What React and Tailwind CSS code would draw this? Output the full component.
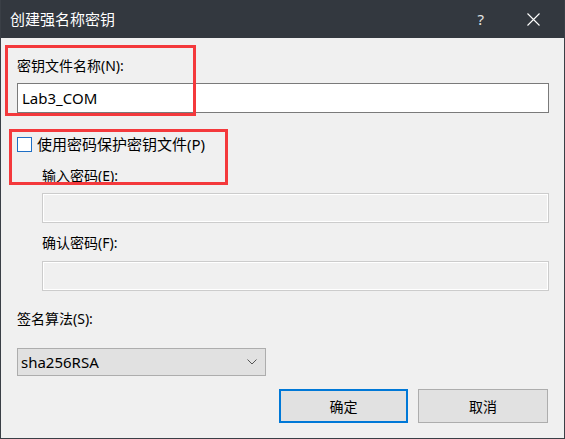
import React from "react";

const font = "font-['Noto_Sans','Noto_Sans_CJK_SC',sans-serif]";

export default function App() {
  return (
    <div className={`relative w-[565px] h-[439px] bg-[#f0f0f0] border border-t-0 border-[#3a3f46] flex flex-col text-black ${font}`}>
      {/* Title bar */}
      <div className="h-[38px] bg-[#33383f] flex items-center pl-[9px] pr-[24px] text-white shrink-0">
        <span className="text-[15px] leading-none">创建强名称密钥</span>
        <div className="ml-auto flex items-center gap-[43px]">
          <span className="text-[15px] leading-none text-[#e6e6e6]">?</span>
          <svg width="13" height="13" viewBox="0 0 13 13">
            <path d="M0.5 0.5 L12.5 12.5 M12.5 0.5 L0.5 12.5" stroke="#ffffff" strokeWidth="1.1" fill="none" />
          </svg>
        </div>
      </div>

      {/* Content */}
      <div className="flex flex-col pl-[16px] pr-[15px]">
        <div className="mt-[18px] h-[20px] leading-[20px] text-[14px]">密钥文件名称(N):</div>
        <div className="mt-[7px] h-[30px] bg-white border border-[#7a7a7a] flex items-center pl-[4px] text-[15px]">
          Lab3_COM
        </div>

        <div className="mt-[21px] h-[20px] flex items-center">
          <div className="w-[15px] h-[15px] border border-[#1f6fc5] bg-white shrink-0" />
          <span className="ml-[5px] text-[15px] leading-[20px]">使用密码保护密钥文件(P)</span>
        </div>

        <div className="pl-[25px] flex flex-col">
          <div className="mt-[12px] h-[20px] leading-[20px] text-[14px]">输入密码(E):</div>
          <div className="mt-[7px] h-[30px] border border-[#cccccc] bg-[#f0f0f0] shadow-[inset_0_0_0_1px_#ffffff]" />
          <div className="mt-[10px] h-[20px] leading-[20px] text-[14px]">确认密码(F):</div>
          <div className="mt-[8px] h-[30px] border border-[#cccccc] bg-[#f0f0f0] shadow-[inset_0_0_0_1px_#ffffff]" />
        </div>

        <div className="mt-[18px] h-[20px] leading-[20px] text-[14px]">签名算法(S):</div>
        <div className="mt-[19px] w-[249px] h-[28px] bg-[#e1e1e1] border border-[#adadad] flex items-center pl-[3px] pr-[8px] text-[15px]">
          <span>sha256RSA</span>
          <svg className="ml-auto" width="10" height="6" viewBox="0 0 10 6">
            <path d="M0.5 0.5 L5 5 L9.5 0.5" stroke="#555555" strokeWidth="1" fill="none" />
          </svg>
        </div>

        <div className="mt-[13px] flex justify-end gap-[10px] pr-[1px]">
          <button className="w-[129px] h-[34px] bg-[#e1e1e1] border-2 border-[#0078d7] text-[14px]">确定</button>
          <button className="w-[130px] h-[34px] bg-[#e1e1e1] border border-[#adadad] text-[14px]">取消</button>
        </div>
      </div>

      {/* Red annotation boxes */}
      <div className="absolute left-[4px] top-[45px] w-[191px] h-[71px] border-[3px] border-[#f4393c] pointer-events-none" />
      <div className="absolute left-[8px] top-[129px] w-[219px] h-[56px] border-[3px] border-[#f4393c] pointer-events-none" />
    </div>
  );
}
